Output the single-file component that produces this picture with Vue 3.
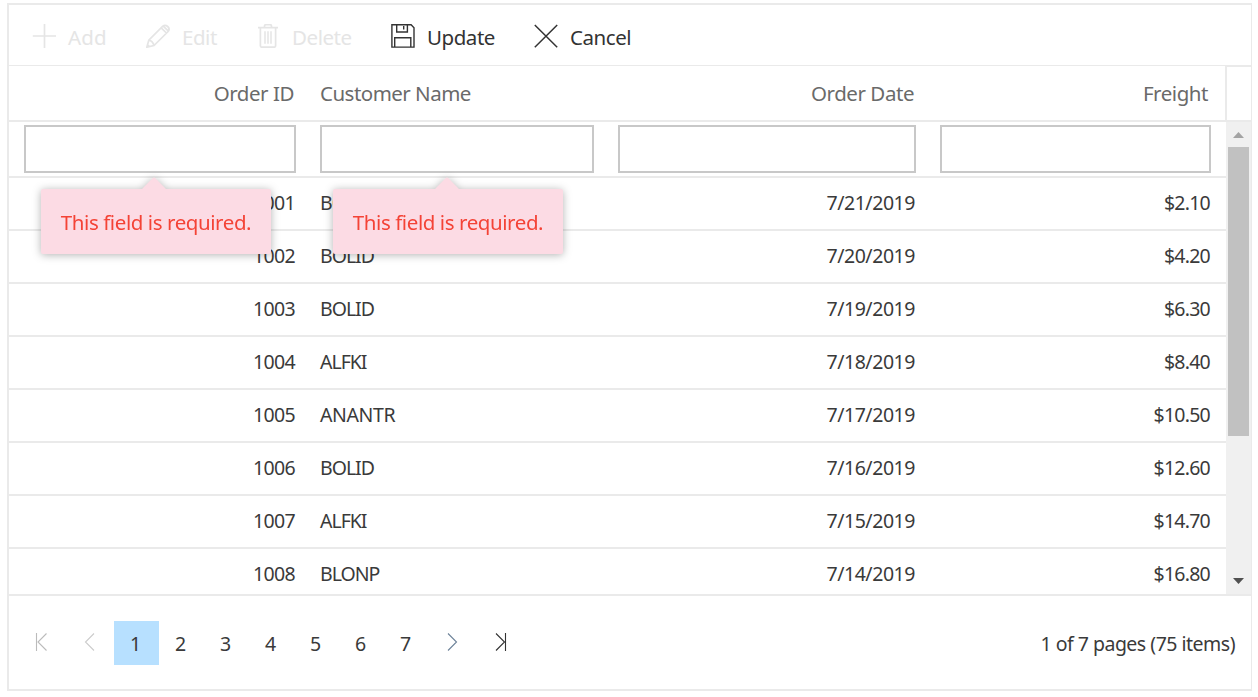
<script setup>
const rows = [
  ['1001', 'BOLID', '7/21/2019', '$2.10'],
  ['1002', 'BOLID', '7/20/2019', '$4.20'],
  ['1003', 'BOLID', '7/19/2019', '$6.30'],
  ['1004', 'ALFKI', '7/18/2019', '$8.40'],
  ['1005', 'ANANTR', '7/17/2019', '$10.50'],
  ['1006', 'BOLID', '7/16/2019', '$12.60'],
  ['1007', 'ALFKI', '7/15/2019', '$14.70'],
  ['1008', 'BLONP', '7/14/2019', '$16.80'],
]
const pages = [1, 2, 3, 4, 5, 6, 7]
</script>

<template>
  <div class="grid">
    <div class="toolbar">
      <button class="tool disabled">
        <svg viewBox="0 0 24 24"><path d="M12.500 0v24M.8 12h23.400" stroke-width="1.7" /></svg>
        <span class="t-add">Add</span>
      </button>
      <button class="tool disabled">
        <svg viewBox="0 0 24 24"><path d="M.8 23.2l2-7L16.8 2.2q2.3-2 4.900.3t.4 5L8 21.500zM2.800 16.200q4 .8 5.200 5.300M15.200 3.800l5.200 5.200M17.300 2.100l5.100 5.100M1.500 20.700l1.800 1.800" stroke-width="1.7" /></svg>
        <span class="t-edit">Edit</span>
      </button>
      <button class="tool disabled">
        <svg viewBox="0 0 24 24"><path d="M2 3.7h20M8.500 3.500V2q0-1.300 1.300-1.300h4.400q1.300 0 1.300 1.300v1.500M4.400 4v17.700q0 1.500 1.500 1.500h12.200q1.500 0 1.500-1.500V4" stroke-width="1.700" /><path d="M9 7.200v12.500M12 7.200v12.500M15 7.200v12.500" stroke-width="1.5" /></svg>
        <span class="t-delete">Delete</span>
      </button>
      <button class="tool">
        <svg viewBox="0 0 24 24"><path d="M.9.8h19.200L23 3.700v19.400H.9zM5.700 1v7h10.700V1M12.700 2v3.500M3.700 23v-9.200h16.100V23" stroke-width="1.4" /></svg>
        <span class="t-update">Update</span>
      </button>
      <button class="tool">
        <svg viewBox="0 0 24 24"><path d="M.8 1l22.400 22.200M23.200 1L.8 23.200" stroke-width="1.5" /></svg>
        <span class="t-cancel">Cancel</span>
      </button>
    </div>

    <div class="header">
      <div class="columns head-row">
        <div class="cell right">Order ID</div>
        <div class="cell name">Customer Name</div>
        <div class="cell right">Order Date</div>
        <div class="cell right">Freight</div>
      </div>
      <div class="head-gutter"></div>
    </div>

    <div class="content">
      <div class="rows">
        <div class="columns edit-row">
          <div v-for="n in 4" :key="n" class="cell">
            <input class="field" type="text" />
            <div v-if="n < 3" class="error" :class="'error-' + n">
              <svg class="tip" viewBox="0 0 24 12"><path d="M0 12L10.800 1q1.200-1 2.400 0L24 12z" /></svg>
              <span>This field is required.</span>
            </div>
          </div>
        </div>
        <div v-for="row in rows" :key="row[0]" class="columns row">
          <div v-for="(value, i) in row" :key="i" class="cell" :class="['c' + i, { right: i !== 1, wide: value.length > 5 }]">{{ value }}</div>
        </div>
      </div>
      <div class="scrollbar">
        <svg class="arrow" viewBox="0 0 25 25"><path d="M7 16l5.500-6 5.500 6z" fill="#a3a3a3" /></svg>
        <div class="thumb"></div>
        <svg class="arrow down" viewBox="0 0 25 25"><path d="M7 9l5.500 6L18 9z" fill="#505050" /></svg>
      </div>
    </div>

    <div class="pager">
      <svg class="nav first faded" viewBox="0 0 12 18"><path d="M1.500 0v18" stroke="#bbb" /><path d="M11.500 .5L3 9l8.500 8.500" stroke="#bbb" /></svg>
      <svg class="nav prev faded" viewBox="0 0 12 18"><path d="M10 .5L1.500 9 10 17.500" /></svg>
      <div class="pages">
        <span v-for="p in pages" :key="p" class="page" :class="{ current: p === 1 }">{{ p }}</span>
      </div>
      <svg class="nav next" viewBox="0 0 12 18"><path d="M2 .5L10.500 9 2 17.500" /></svg>
      <svg class="nav last" viewBox="0 0 12 18"><path d="M1 .5L9.500 9 1 17.500M10.500 0v18" /></svg>
      <span class="summary">1 of 7 pages (75 items)</span>
    </div>
  </div>
</template>

<style>
body {
  background: #fff;
  overflow: hidden;
}
</style>

<style scoped>
.grid {
  box-sizing: border-box;
  width: 1245px;
  height: 688px;
  margin: 3px 0 0 7px;
  border: 2px solid #eaeaea;
  border-right-width: 1px;
  background: #fff;
  color: #3a3a3a;
  font: 19.5px/26px "Noto Sans", "Open Sans", sans-serif;
  white-space: nowrap;
  display: flex;
  flex-direction: column;
}
.toolbar {
  height: 60px;
  flex: none;
  border-bottom: 1px solid #eaeaea;
  display: grid;
  grid-template-columns: 114px 110px 135px 143px 140px;
  padding-left: 23px;
}
.tool {
  display: flex;
  gap: 12px;
  padding: 4px 0 0;
  border: 0;
  background: none;
  font: 20.5px/28px "Noto Sans", "Open Sans", sans-serif;
  letter-spacing: -0.45px;
  color: #333;
  align-items: center;
  text-align: left;
}
.tool svg {
  width: 24px;
  height: 24px;
  flex: none;
  margin-top: -3px;
  fill: none;
  stroke: currentColor;
}
.t-add { letter-spacing: 0.1px; }
.disabled { color: #e5e5e5; }
.header {
  display: flex;
  height: 54px;
  flex: none;
  border-bottom: 2px solid #eaeaea;
}
.columns {
  display: grid;
  grid-template-columns: 299px 298px 322px 298px;
  width: 1217px;
}
.cell {
  display: flex;
  align-items: center;
  padding: 0 12px;
  position: relative;
}
.cell:first-child { padding-left: 15px; }
.cell:last-child { padding-right: 15px; }
.right { justify-content: flex-end; }
.head-row {
  width: 1216px;
  font-size: 20.5px;
  letter-spacing: -0.45px;
  color: #6a6a6a;
}
.head-row .name { letter-spacing: -0.52px; }
.head-row .right { padding-right: 14px; }
.head-row .right:last-child { padding-right: 18px; }
.head-gutter {
  box-sizing: border-box;
  flex: 1;
  margin-top: -1px;
  border-left: 2px solid #eaeaea;
  border-top: 2px solid #eaeaea;
}
.content {
  height: 472px;
  flex: none;
  display: flex;
  overflow: hidden;
  border-bottom: 2px solid #eaeaea;
}
.rows { width: 1217px; }
.edit-row {
  height: 54px;
  border-bottom: 2px solid #eaeaea;
  position: relative;
  z-index: 1;
}
.field {
  box-sizing: border-box;
  width: 100%;
  height: 48px;
  border: 2px solid #c8c8c8;
  background: #fff;
  outline: none;
}
.row {
  height: 51px;
  border-bottom: 2px solid #eaeaea;
  letter-spacing: -0.65px;
}
.row .cell { padding-bottom: 1px; }
.row .right { padding-right: 13px; }
.row .right:last-child { padding-right: 16px; }
.row .c1 { letter-spacing: -1px; }
.row .c1.wide { letter-spacing: -0.4px; }
.row .c2 { letter-spacing: -0.45px; }
.row .c3 { letter-spacing: -0.75px; }
.error {
  position: absolute;
  top: 67px;
  width: 230px;
  height: 65px;
  border-radius: 2px;
  background: #fcdbe4;
  color: #f44336;
  display: flex;
  align-items: center;
  justify-content: center;
  font-size: 20.5px;
  letter-spacing: -0.42px;
  filter: drop-shadow(0 1px 4px rgba(0, 0, 0, 0.3));
}
.error-1 { left: 32px; }
.error-2 { left: 25px; }
.tip {
  position: absolute;
  top: -12px;
  left: 101px;
  width: 24px;
  height: 12px;
  fill: #fcdbe4;
}
.error-2 .tip { left: 102px; }
.scrollbar {
  width: 25px;
  background: #f0f0f0;
  display: flex;
  flex-direction: column;
}
.arrow {
  display: block;
  width: 25px;
  height: 25px;
}
.thumb {
  height: 289px;
  margin: 0 2px;
  background: #c1c1c1;
}
.down { margin-top: auto; }
.pager {
  height: 93px;
  display: flex;
  align-items: center;
  padding: 0 16px 0 26px;
}
.nav {
  width: 12px;
  height: 18px;
  flex: none;
  fill: none;
  stroke: #333;
  stroke-width: 1.1;
  margin-top: -1px;
}
.faded { stroke: #ccc; }
.prev { margin-left: 37px; }
.pages {
  display: flex;
  margin-left: 18px;
}
.page {
  box-sizing: border-box;
  width: 45px;
  height: 44px;
  line-height: 46px;
  padding-right: 2px;
  text-align: center;
}
.current { background: #b7e0ff; }
.next {
  margin-left: 17px;
  stroke: #6d8299;
}
.last { margin-left: 37px; }
.summary {
  margin-left: auto;
  padding-top: 2px;
  letter-spacing: -0.5px;
}
</style>
